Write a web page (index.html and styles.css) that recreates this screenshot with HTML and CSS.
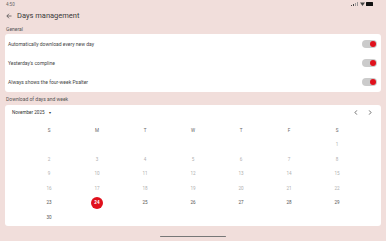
FILE: index.html
```html
<!DOCTYPE html>
<html>
<head>
<meta charset="utf-8">
<link rel="stylesheet" href="styles.css">
</head>
<body>
<div class="screen">
  <div class="status">
    <span class="time">4:50</span>
    <span class="sicons">
      <svg width="7" height="4" viewBox="0 0 7 4"><rect x="0" y="3" width="1" height="1" fill="#444"/><rect x="2" y="2" width="1" height="2" fill="#444"/><rect x="4" y="1" width="1" height="3" fill="#999"/><rect x="6" y="0" width="1" height="4" fill="#999"/></svg>
      <svg width="5" height="4" viewBox="0 0 5 4"><path d="M0 0.5 L5 0.5 L2.5 4 Z" fill="#444"/></svg>
      <svg width="7" height="4" viewBox="0 0 7 4"><rect x="0" y="0" width="7" height="4" rx="0.5" fill="#111"/></svg>
    </span>
  </div>
  <div class="appbar">
    <svg class="back" width="6" height="6" viewBox="0 0 12 12"><path d="M11 6 H2 M6 1.5 L1.5 6 L6 10.5" stroke="#444" stroke-width="1.4" fill="none"/></svg>
    <span class="title">Days management</span>
  </div>
  <div class="section-label">General</div>
  <div class="card settings">
    <div class="row"><span>Automatically download every new day</span><span class="toggle"><span class="thumb"></span></span></div>
    <div class="row"><span>Yesterday's compline</span><span class="toggle"><span class="thumb"></span></span></div>
    <div class="row"><span>Always shows the four-week Psalter</span><span class="toggle"><span class="thumb"></span></span></div>
  </div>
  <div class="section-label second">Download of days and week</div>
  <div class="card calendar">
    <div class="cal-head">
      <span class="month">November 2025 <span class="caret">▾</span></span>
      <span class="navs">
        <svg width="4" height="5" viewBox="0 0 4 6"><path d="M3 0.5 L0.8 3 L3 5.5" stroke="#444" stroke-width="0.9" fill="none"/></svg>
        <svg width="4" height="5" viewBox="0 0 4 6"><path d="M1 0.5 L3.2 3 L1 5.5" stroke="#444" stroke-width="0.9" fill="none"/></svg>
      </span>
    </div>
    <div class="grid">
      <span class="wd">S</span><span class="wd">M</span><span class="wd">T</span><span class="wd">W</span><span class="wd">T</span><span class="wd">F</span><span class="wd">S</span>
      <span></span><span></span><span></span><span></span><span></span><span></span><span class="d">1</span>
      <span class="d">2</span><span class="d">3</span><span class="d">4</span><span class="d">5</span><span class="d">6</span><span class="d">7</span><span class="d">8</span>
      <span class="d">9</span><span class="d">10</span><span class="d">11</span><span class="d">12</span><span class="d">13</span><span class="d">14</span><span class="d">15</span>
      <span class="d">16</span><span class="d">17</span><span class="d">18</span><span class="d">19</span><span class="d">20</span><span class="d">21</span><span class="d">22</span>
      <span class="d on">23</span><span class="d sel"><span class="dot">24</span></span><span class="d on">25</span><span class="d on">26</span><span class="d on">27</span><span class="d on">28</span><span class="d on">29</span>
      <span class="d on">30</span><span></span><span></span><span></span><span></span><span></span><span></span>
    </div>
  </div>
  <div class="home-wrap"><div class="home"></div></div>
</div>
</body>
</html>
```

FILE: styles.css
```css
html, body {
  margin: 0;
  padding: 0;
}
body {
  background: #f1dedb;
  font-family: Roboto, "Noto Sans", sans-serif;
  width: 386px;
  height: 241px;
  overflow: hidden;
}
.screen {
  display: flex;
  flex-direction: column;
  padding: 0 5px;
  height: 241px;
  box-sizing: border-box;
}
.status {
  height: 8px;
  display: flex;
  align-items: center;
  justify-content: space-between;
  padding: 0 8px 0 1px;
}
.time {
  font-size: 4.5px;
  color: #666;
}
.sicons {
  display: flex;
  align-items: center;
  gap: 1.5px;
}
.sicons svg { display: block; }
.appbar {
  height: 15px;
  display: flex;
  align-items: center;
  gap: 5px;
  padding-left: 1px;
}
.back { display: block; }
.title {
  font-size: 7.5px;
  color: #3a3a3a;
}
.section-label {
  font-size: 5px;
  color: #555;
  height: 11px;
  line-height: 12px;
  padding-left: 1px;
}
.section-label.second {
  height: 13px;
  line-height: 14px;
}
.card {
  background: #fff;
  border-radius: 3px;
}
.settings {
  display: flex;
  flex-direction: column;
  padding: 0;
}
.row {
  height: 19.3px;
  display: flex;
  align-items: center;
  justify-content: space-between;
  padding: 0 4px 0 3px;
  font-size: 5px;
  color: #444;
}
.toggle {
  width: 15px;
  height: 8px;
  background: #cbcbcb;
  border-radius: 4px;
  display: flex;
  align-items: center;
  justify-content: flex-end;
  padding-right: 1px;
  box-sizing: border-box;
}
.thumb {
  width: 6px;
  height: 6px;
  border-radius: 50%;
  background: #e0101c;
}
.calendar {
  height: 121px;
  display: flex;
  flex-direction: column;
}
.cal-head {
  height: 16px;
  display: flex;
  align-items: center;
  justify-content: space-between;
  padding: 0 9px 0 7px;
}
.month {
  font-size: 4.6px;
  color: #333;
}
.caret {
  font-size: 4px;
  margin-left: 3px;
  color: #333;
}
.navs {
  display: flex;
  gap: 10px;
  align-items: center;
}
.navs svg { display: block; }
.grid {
  display: grid;
  grid-template-columns: repeat(7, 48px);
  grid-auto-rows: 14.5px;
  padding: 2px 20px 0;
  font-size: 4.6px;
}
.grid > span {
  display: flex;
  align-items: center;
  justify-content: center;
}
.wd { color: #666; }
.d { color: #b0b0b0; }
.d.on { color: #555; }
.dot {
  width: 12px;
  height: 12px;
  border-radius: 50%;
  background: #e0101c;
  color: #fff;
  font-weight: bold;
  display: flex;
  align-items: center;
  justify-content: center;
}
.home-wrap {
  flex: 1;
  display: flex;
  align-items: flex-end;
  justify-content: center;
  padding-bottom: 4px;
}
.home {
  width: 66px;
  height: 1.5px;
  background: #777;
  border-radius: 1px;
}
```
